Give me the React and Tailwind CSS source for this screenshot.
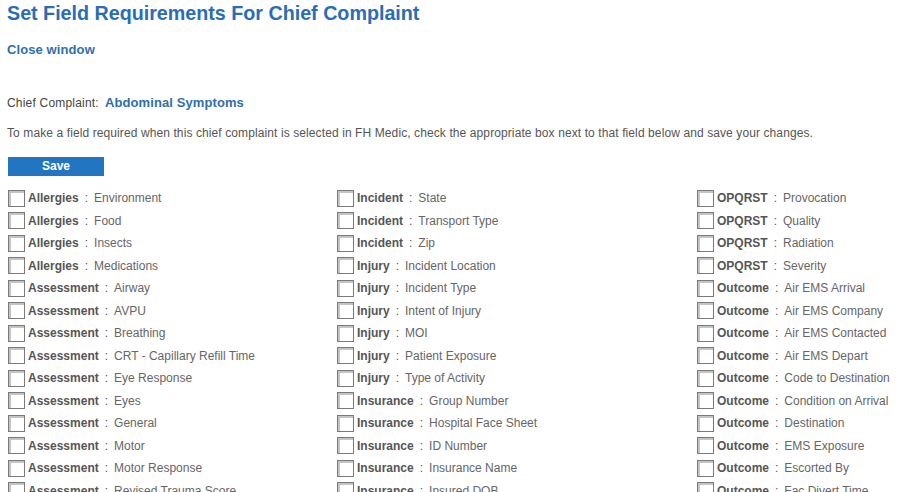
import React from "react";

const columns = [
  [
    ["Allergies", "Environment"],
    ["Allergies", "Food"],
    ["Allergies", "Insects"],
    ["Allergies", "Medications"],
    ["Assessment", "Airway"],
    ["Assessment", "AVPU"],
    ["Assessment", "Breathing"],
    ["Assessment", "CRT - Capillary Refill Time"],
    ["Assessment", "Eye Response"],
    ["Assessment", "Eyes"],
    ["Assessment", "General"],
    ["Assessment", "Motor"],
    ["Assessment", "Motor Response"],
    ["Assessment", "Revised Trauma Score"],
  ],
  [
    ["Incident", "State"],
    ["Incident", "Transport Type"],
    ["Incident", "Zip"],
    ["Injury", "Incident Location"],
    ["Injury", "Incident Type"],
    ["Injury", "Intent of Injury"],
    ["Injury", "MOI"],
    ["Injury", "Patient Exposure"],
    ["Injury", "Type of Activity"],
    ["Insurance", "Group Number"],
    ["Insurance", "Hospital Face Sheet"],
    ["Insurance", "ID Number"],
    ["Insurance", "Insurance Name"],
    ["Insurance", "Insured DOB"],
  ],
  [
    ["OPQRST", "Provocation"],
    ["OPQRST", "Quality"],
    ["OPQRST", "Radiation"],
    ["OPQRST", "Severity"],
    ["Outcome", "Air EMS Arrival"],
    ["Outcome", "Air EMS Company"],
    ["Outcome", "Air EMS Contacted"],
    ["Outcome", "Air EMS Depart"],
    ["Outcome", "Code to Destination"],
    ["Outcome", "Condition on Arrival"],
    ["Outcome", "Destination"],
    ["Outcome", "EMS Exposure"],
    ["Outcome", "Escorted By"],
    ["Outcome", "Fac Divert Time"],
  ],
];

function Checkbox() {
  // old-style sunken checkbox
  return (
    <span className="inline-block w-[17px] h-[17px] border border-[#7a7a7a] bg-white shrink-0">
      <span className="block w-full h-full border-t-2 border-l-2 border-[#c4c4c4]" />
    </span>
  );
}

function FieldRow({ group, field }) {
  return (
    <label className="flex items-center h-[22.5px] text-[12px] text-[#555]">
      <Checkbox />
      <span className="ml-[3px] font-bold">{group}</span>
      <span className="mx-[6px]">:</span>
      <span className="text-[#666]">{field}</span>
    </label>
  );
}

export default function App() {
  return (
    <div
      className="bg-white w-[897px] h-[492px] overflow-hidden px-[7px] pt-[1px]"
      style={{ fontFamily: '"Liberation Sans", Arial, sans-serif' }}
    >
      <h1 className="text-[19.7px] font-bold text-[#2a6db4] leading-[24px]">
        Set Field Requirements For Chief Complaint
      </h1>
      <div className="mt-[17px] text-[13px] font-bold text-[#2f6faa] leading-[16px] tracking-[0.1px]">
        Close window
      </div>

      <div className="mt-[37px] flex items-baseline text-[12px] leading-[16px]">
        <span className="text-[#444] tracking-[0.2px]">Chief Complaint:</span>
        <span className="ml-[6px] text-[13px] font-bold text-[#2f6faa] tracking-[0.1px]">
          Abdominal Symptoms
        </span>
      </div>

      <p className="mt-[14px] text-[12px] text-[#555] leading-[16px] tracking-[0.1px]">
        To make a field required when this chief complaint is selected in FH Medic,
        check the appropriate box next to that field below and save your changes.
      </p>

      <button className="mt-[16px] ml-[1px] w-[96px] h-[19px] bg-[#2175c1] text-white text-[12px] font-bold leading-[19px]">
        Save
      </button>

      <div className="mt-[10px] ml-[1px] grid grid-cols-[329px_360px_1fr]">
        {columns.map((col, i) => (
          <div key={i} className="flex flex-col">
            {col.map(([group, field]) => (
              <FieldRow key={group + field} group={group} field={field} />
            ))}
          </div>
        ))}
      </div>
    </div>
  );
}
